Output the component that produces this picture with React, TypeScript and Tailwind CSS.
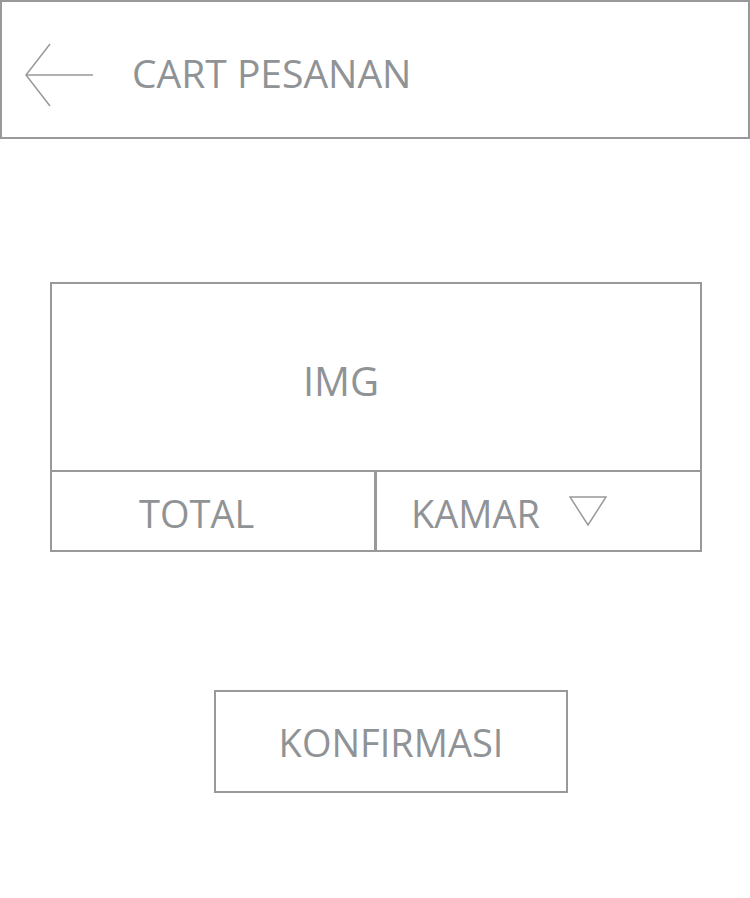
export default function App() {
  return (
    <div className="w-[750px] h-[898px] bg-white text-[#909396]" style={{ fontFamily: '"Open Sans", "Noto Sans", sans-serif' }}>
      {/* Header */}
      <div className="flex items-start h-[139px] border-2 border-[#97999b] pl-[22px]">
        <svg className="mt-[41px]" width="69" height="64" viewBox="0 0 69 64" fill="none" stroke="#97999b" strokeWidth="1.5">
          <path d="M26 1 L2 32 L26 63" />
          <path d="M2 32 H69" />
        </svg>
        <span className="ml-[39px] mt-[51px] text-[39px] leading-none">CART PESANAN</span>
      </div>

      {/* Card */}
      <div className="ml-[50px] mt-[143px] w-[652px] border-2 border-[#97999b]">
        <div className="flex h-[186px] items-center justify-center pr-[70px] text-[40px] leading-none">
          <span className="pt-2">IMG</span>
        </div>
        <div className="flex h-[80px] border-t-2 border-[#97999b] text-[38px] leading-none">
          <div className="flex w-[325px] items-center border-r-[3px] border-[#97999b] pl-[87px]">
            <span className="pt-1">TOTAL</span>
          </div>
          <div className="flex flex-1 items-center pl-[34px]">
            <span className="pt-1">KAMAR</span>
            <svg className="ml-[29px]" width="38" height="30" viewBox="0 0 38 30" fill="none" stroke="#97999b" strokeWidth="1.5">
              <path d="M1 1 H37 L19 29 Z" strokeLinejoin="miter" />
            </svg>
          </div>
        </div>
      </div>

      {/* Button */}
      <div className="ml-[214px] mt-[138px] flex h-[103px] w-[354px] items-center justify-center border-2 border-[#97999b] text-[38px] leading-none">
        <span>KONFIRMASI</span>
      </div>
    </div>
  );
}
